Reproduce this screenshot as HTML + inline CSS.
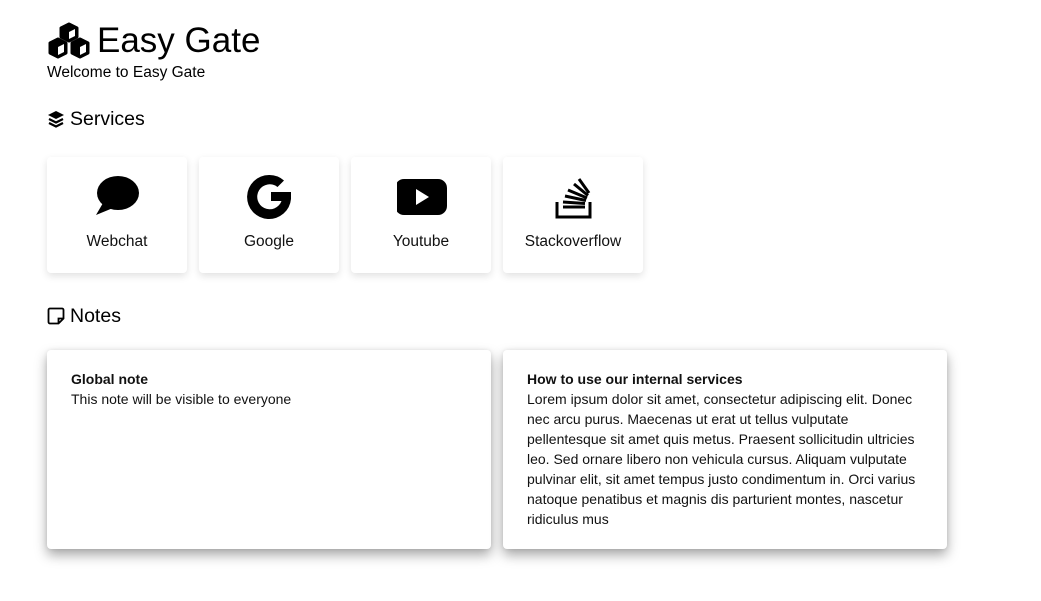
<!DOCTYPE html>
<html><head><style>
body{margin:0;background:#fff;font-family:"Liberation Sans",Arial,sans-serif;color:#000;}
.abs{position:absolute}
.card{position:absolute;top:157px;width:140px;height:116px;background:#fff;border-radius:4px;box-shadow:0 3px 8px rgba(0,0,0,.12);}
.card svg{position:absolute;left:46px;top:16px}
.card .t{position:absolute;top:76px;width:100%;text-align:center;font-size:15.5px;color:#111}
.note{position:absolute;top:350px;width:444px;height:199px;background:#fff;border-radius:4px;box-shadow:0 6px 12px rgba(0,0,0,.35),0 0 4px rgba(0,0,0,.08);}
.note .in{padding:19px 24px;font-size:14px;line-height:20px;color:#111}
.note b{font-weight:bold;display:block}
</style></head><body>
<svg class="abs" style="left:47px;top:22px" width="44" height="38" viewBox="0 0 44 38">
<g fill="#000" stroke="#000" stroke-width="3" stroke-linejoin="round">
<path d="M22 2l8 4v9l-8 4-8-4V6z"/><path d="M11 17l8 4v10l-8 4-8-4V21z"/><path d="M33 17l8 4v10l-8 4-8-4V21z"/></g>
<g fill="#fff"><path d="M22 10l6-3v7l-6 3z"/><path d="M11 25l6-3v8l-6 3z"/><path d="M33 25l6-3v8l-6 3z"/></g>
</svg>
<div class="abs" style="left:97px;top:21px;font-size:35px">Easy Gate</div>
<div class="abs" style="left:47px;top:64px;font-size:15.5px">Welcome to Easy Gate</div>
<svg class="abs" style="left:47px;top:110px" width="18" height="18" viewBox="0 0 18 18"><path d="M9 1L1 5l8 4 8-4z" fill="#000"/><path d="M2 9l7 3.5L16 9M2 13l7 3.5 7-3.5" stroke="#000" stroke-width="2.2" fill="none"/></svg>
<div class="abs" style="left:70px;top:108px;font-size:19.5px">Services</div>

<div class="card" style="left:47px"><svg width="48" height="44" viewBox="0 0 48 44"><ellipse cx="25" cy="20" rx="21" ry="17"/><path d="M10 30 L3 42 L20 35z"/></svg><div class="t">Webchat</div></div>
<div class="card" style="left:199px"><svg width="48" height="48" viewBox="0 0 48 48"><path d="M24 2a22 22 0 1 0 22 24V19H26v9h10.5a12.5 12.5 0 1 1-4-14l6.5-6.5A22 22 0 0 0 24 2z"/></svg><div class="t">Google</div></div>
<div class="card" style="left:351px"><svg width="52" height="44" viewBox="0 0 52 44"><rect x="-2" y="6" width="52" height="36" rx="9"/><path d="M19 16v16l13-8z" fill="#fff"/></svg><div class="t">Youtube</div></div>
<div class="card" style="left:503px"><svg width="48" height="48" viewBox="0 0 48 48"><g stroke="#000" stroke-width="3" fill="none"><path d="M8 29V44H41V29"/><path d="M14 34H36M14 29L36 30.5M16 23L37 27.5M19 17L38 25M25 11L39 22.5M30 6L40 20"/></g></svg><div class="t">Stackoverflow</div></div>

<svg class="abs" style="left:47px;top:307px" width="18" height="18" viewBox="0 0 18 18"><path d="M3 1.5h12a1.5 1.5 0 0 1 1.5 1.5v8.5l-5 5H3A1.5 1.5 0 0 1 1.5 15V3A1.5 1.5 0 0 1 3 1.5z M11.5 16.5v-5h5" fill="none" stroke="#000" stroke-width="1.8"/></svg>
<div class="abs" style="left:70px;top:305px;font-size:19.5px">Notes</div>

<div class="note" style="left:47px"><div class="in"><b>Global note</b>This note will be visible to everyone</div></div>
<div class="note" style="left:503px"><div class="in"><b>How to use our internal services</b>Lorem ipsum dolor sit amet, consectetur adipiscing elit. Donec nec arcu purus. Maecenas ut erat ut tellus vulputate pellentesque sit amet quis metus. Praesent sollicitudin ultricies leo. Sed ornare libero non vehicula cursus. Aliquam vulputate pulvinar elit, sit amet tempus justo condimentum in. Orci varius natoque penatibus et magnis dis parturient montes, nascetur ridiculus mus</div></div>
</body></html>
